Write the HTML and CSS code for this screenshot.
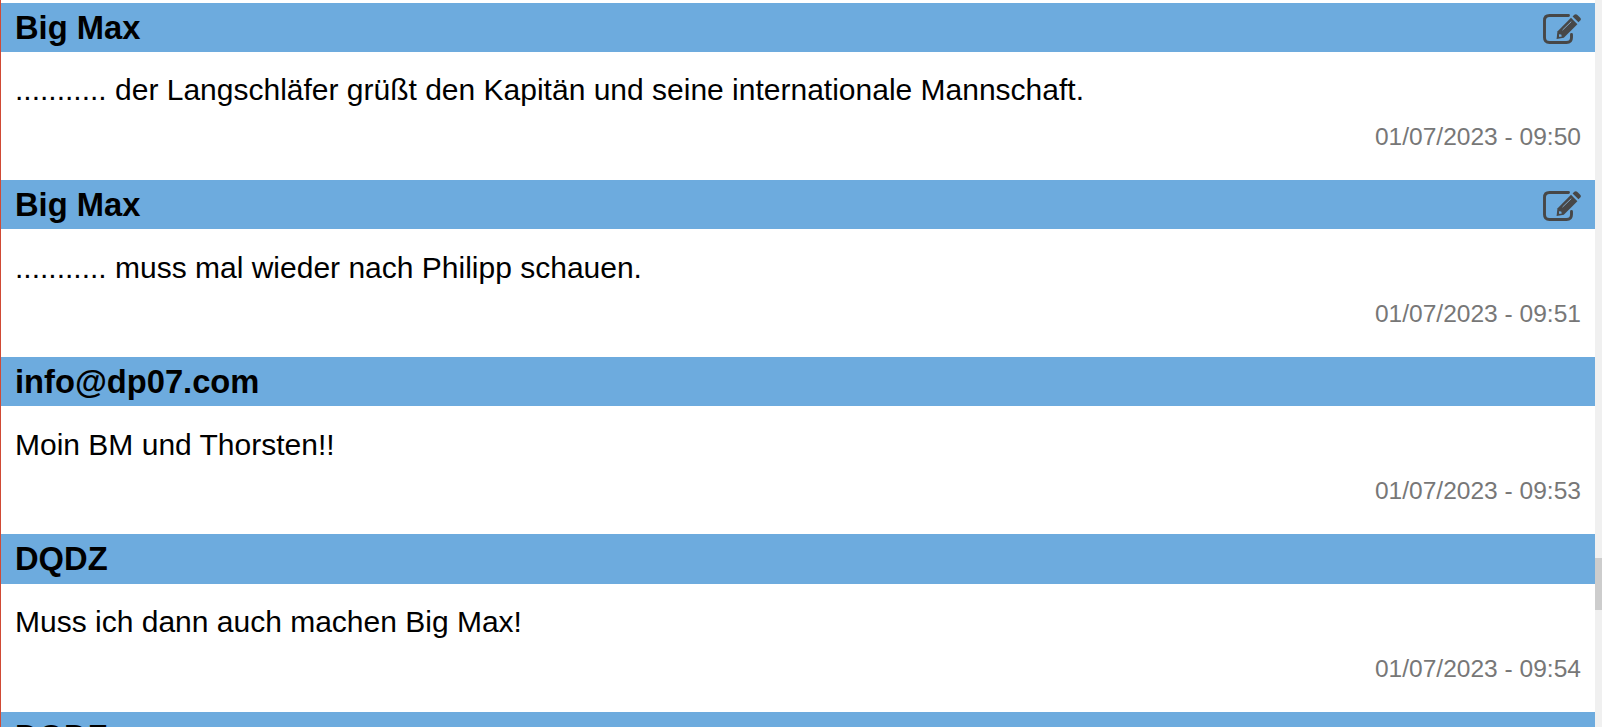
FILE: index.html
```html
<!DOCTYPE html>
<html lang="de">
<head>
  <meta charset="UTF-8">
  <title>Chat</title>
  <link rel="stylesheet" href="styles.css">
</head>
<body>

  <svg class="hidden">
    <symbol id="edit" viewBox="0 0 38 30">
      <path d="M25.5 1.5H6.5Q1.5 1.5 1.5 6.5V23.5Q1.5 28.5 6.5 28.5H23.5Q28.5 28.5 28.5 23.5V20.5" fill="none" stroke="#474747" stroke-width="2.9" stroke-linecap="round"/>
      <path d="M13.6 25L14.4 17.4L28 3.8L34.4 10.2L20.8 23.8Z" fill="#474747"/>
      <path d="M29.6 2.4L31.3 0.8Q32.8 -0.5 34.4 0.9L37.2 3.7Q38.6 5.1 37.2 6.6L35.5 8.3Z" fill="#474747"/>
      <path d="M19.5 16.1L28.3 7.6" stroke="#82a6c4" stroke-width="1" fill="none"/>
      <path d="M15.9 20.2L18.2 20.6L18.8 22.6L16.2 22.9Z" fill="#6dabde"/>
    </symbol>
  </svg>

  <div class="chat">
    <div class="message">
      <div class="head">
        <span class="name">Big Max</span>
        <svg class="edit"><use href="#edit"/></svg>
      </div>
      <p class="text">........... der Langschläfer grüßt den Kapitän und seine internationale Mannschaft.</p>
      <div class="date">01/07/2023 - 09:50</div>
    </div>

    <div class="message">
      <div class="head">
        <span class="name">Big Max</span>
        <svg class="edit"><use href="#edit"/></svg>
      </div>
      <p class="text">........... muss mal wieder nach Philipp schauen.</p>
      <div class="date">01/07/2023 - 09:51</div>
    </div>

    <div class="message">
      <div class="head"><span class="name">info@dp07.com</span></div>
      <p class="text">Moin BM und Thorsten!!</p>
      <div class="date">01/07/2023 - 09:53</div>
    </div>

    <div class="message">
      <div class="head"><span class="name">DQDZ</span></div>
      <p class="text">Muss ich dann auch machen Big Max!</p>
      <div class="date">01/07/2023 - 09:54</div>
    </div>

    <div class="message">
      <div class="head"><span class="name">DQDZ</span></div>
    </div>
  </div>

  <div class="scrollbar">
    <div class="thumb"></div>
  </div>

</body>
</html>
```

FILE: styles.css
```css
* {
  box-sizing: border-box;
}

body {
  margin: 0;
  height: 100vh;
  display: flex;
  overflow: hidden;
  font-family: Arial, "Liberation Sans", sans-serif;
  font-size: 30px;
  color: #000;
  background: #fff;
}

.hidden {
  display: none;
}

.chat {
  flex: 1;
  height: 100vh;
  overflow: hidden;
  padding-top: 2.8px;
  border-left: 1px solid #d04a35;
}

.message {
  height: 177.2px;
}

.head {
  display: flex;
  justify-content: space-between;
  align-items: center;
  height: 49.2px;
  padding: 1px 14px 0;
  background: #6dabde;
}

.name {
  font-size: 32.7px;
  line-height: 38px;
  font-weight: bold;
}

.edit {
  width: 38px;
  height: 30px;
  margin-top: 2px;
}

.text {
  margin: 20.4px 14px 0;
  line-height: 36px;
}

.date {
  margin: 13.6px 14px 0;
  font-size: 24.55px;
  line-height: 30px;
  text-align: right;
  color: #777;
}

.scrollbar {
  width: 7px;
  padding-top: 558px;
  background: #f0f0f0;
}

.thumb {
  height: 52px;
  background: #cdcdcd;
}
```
